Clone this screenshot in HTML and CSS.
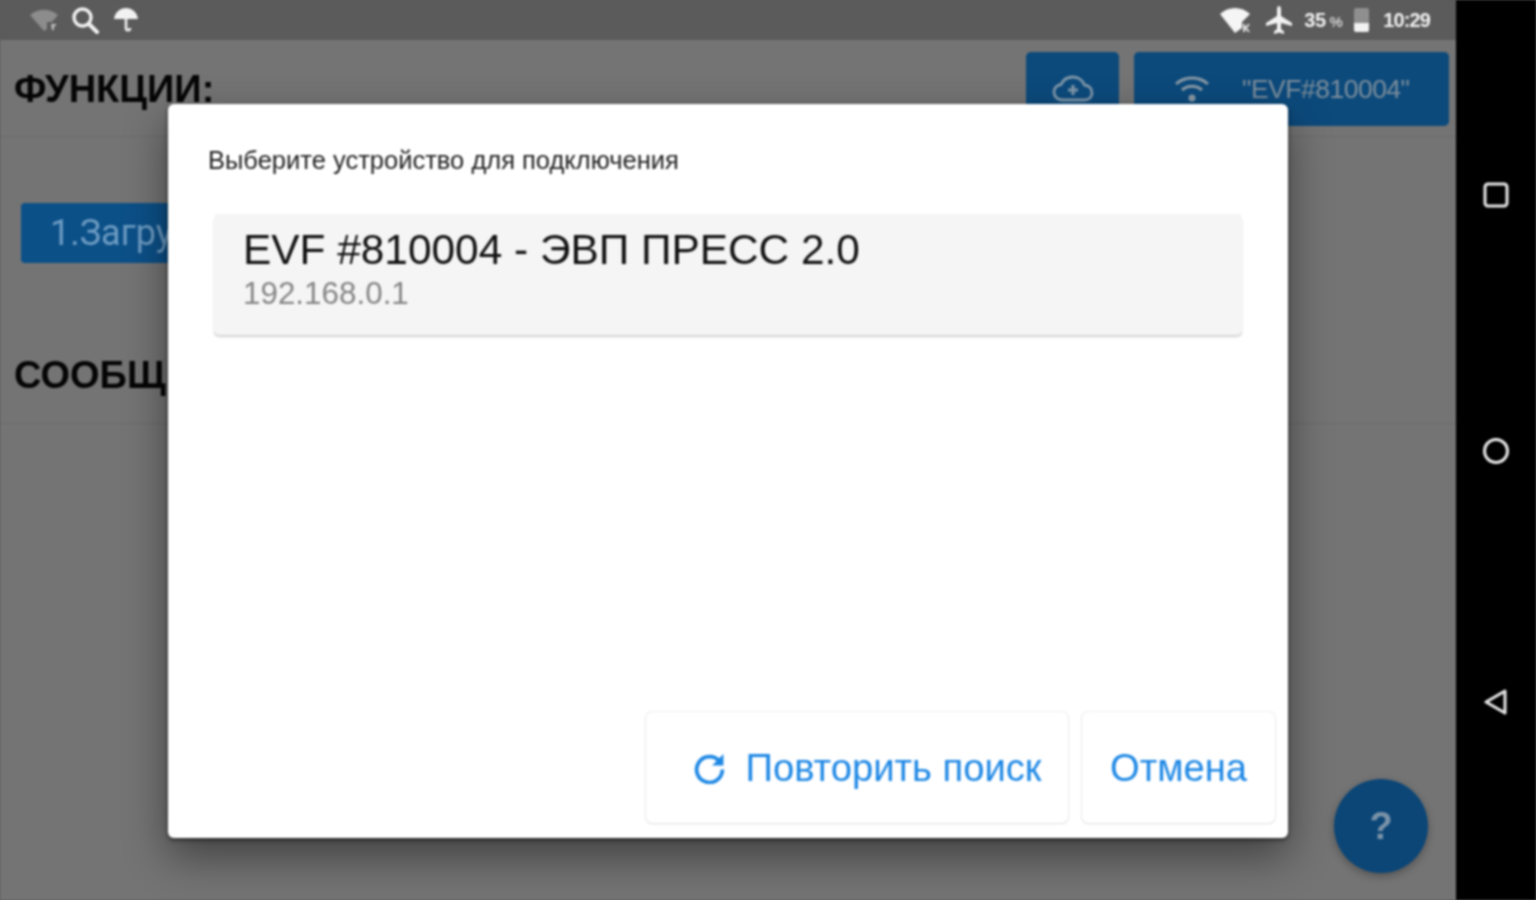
FILE: index.html
```html
<!DOCTYPE html>
<html lang="ru">
<head>
<meta charset="utf-8">
<title>Выбор устройства</title>
<link rel="stylesheet" href="styles.css">
</head>
<body>
<div class="device">
  <div class="screen">
    <div class="status">
      <div class="status-left">
        <svg class="ic wifi-dim" viewBox="0 0 28 22"><path d="M0 6C8-1 20-1 28 6L22 13H17V20L14 22Z" fill="#8c8c8c"/><path d="M21 15h5v2h-2v4h-2" fill="#bdbdbd"/></svg>
        <svg class="ic search" viewBox="0 0 28 28"><circle cx="11.500" cy="11.500" r="8.500" fill="none" stroke="#f2f2f2" stroke-width="3.400"/><path d="M18 18l8 8" stroke="#f2f2f2" stroke-width="4" stroke-linecap="round"/></svg>
        <svg class="ic umbrella" viewBox="0 0 26 26"><path d="M1 12C2 5 7 1 13 1s11 4 12 11Z" fill="#f2f2f2"/><path d="M13 11v10c0 3 4 3 4 0" fill="none" stroke="#f2f2f2" stroke-width="2.600"/></svg>
      </div>
      <div class="status-right">
        <svg class="ic wifi-on" viewBox="0 0 30 26"><path d="M0 7C8-1 22-1 30 7L22 15V21L15 26Z" fill="#f5f5f5"/><path d="M23 17h2v3l3-3h2l-3 4 3 4h-2l-3-3v3h-2Z" fill="#e0e0e0"/></svg>
        <svg class="ic plane" viewBox="0 0 26 28"><path d="M13 0c1.500 0 2 2 2 4v6l11 7v3l-11-3v6l3 2.500V28l-5-1.500L8 28v-2.500l3-2.500v-6L0 20v-3l11-7V4c0-2 .5-4 2-4Z" fill="#f2f2f2"/></svg>
        <span class="pct">35<small>%</small></span>
        <span class="battery"><span class="battery-fill"></span></span>
        <span class="clock">10:29</span>
      </div>
    </div>

    <header class="bar">
      <h2 class="heading">ФУНКЦИИ:</h2>
      <div class="bar-actions">
        <button class="top-btn cloud-btn">
          <svg class="cloud" viewBox="0 0 42 32"><path d="M11 25C5 25 2 21 2 17c0-4 3-7 7-7.500C11 5 15 2 21 2c6 0 10 4 11.500 8C37 10.500 40 13.500 40 18c0 4-3 7-8 7Z" fill="none" stroke="#7f97aa" stroke-width="2.800"/><path d="M21 10v10M16 15h10" stroke="#7f97aa" stroke-width="3.200"/></svg>
        </button>
        <button class="top-btn conn-btn">
          <svg class="wifi-line" viewBox="0 0 36 30"><path d="M2 10c9-8 23-8 32 0M8 16c6-5 14-5 20 0" fill="none" stroke="#8a9aa6" stroke-width="3"/><circle cx="18" cy="24" r="3.500" fill="#8a9aa6"/></svg>
          <span>"EVF#810004"</span>
        </button>
      </div>
    </header>

    <section class="functions">
      <button class="load-btn">1.Загрузка</button>
    </section>

    <section class="messages">
      <h2 class="heading">СООБЩЕНИЯ:</h2>
    </section>

    <div class="dialog">
      <p class="dialog-title">Выберите устройство для подключения</p>
      <div class="card">
        <div class="card-name">EVF #810004 - ЭВП ПРЕСС 2.0</div>
        <div class="card-ip">192.168.0.1</div>
      </div>
      <div class="actions">
        <button class="act act-retry">
          <svg class="refresh" viewBox="0 0 32 32"><path d="M26 10.500A12.500 12.500 0 1 0 28.500 18" fill="none" stroke="#1e88e5" stroke-width="3.600"/><path d="M29.500 3v11h-11Z" fill="#1e88e5"/></svg>
          <span>Повторить поиск</span>
        </button>
        <button class="act act-cancel">Отмена</button>
      </div>
    </div>

    <button class="fab">?</button>
  </div>

  <nav class="nav">
    <svg class="nav-ic nav-square" viewBox="0 0 26 26"><rect x="2" y="2" width="22" height="22" rx="3" fill="none" stroke="#e8e8e8" stroke-width="3"/></svg>
    <svg class="nav-ic nav-circle" viewBox="0 0 26 26"><circle cx="13" cy="13" r="11.500" fill="none" stroke="#e8e8e8" stroke-width="3"/></svg>
    <svg class="nav-ic nav-back" viewBox="0 0 26 26"><path d="M22 2V24L3 13Z" fill="none" stroke="#e8e8e8" stroke-width="3" stroke-linejoin="round"/></svg>
  </nav>
</div>
</body>
</html>
```
FILE: styles.css
```css
* { box-sizing: border-box; }
html, body { margin: 0; height: 100%; overflow: hidden; background: #5b5b5b; }
body { font-family: "Liberation Sans", Arial, sans-serif; }
button { font-family: inherit; border: 0; padding: 0; }

.device { display: flex; width: 1536px; height: 900px; filter: blur(0.8px); }
.screen { position: relative; width: 1456px; height: 900px; background: #747474; overflow: hidden; }
.nav { width: 80px; background: #000; display: flex; flex-direction: column; align-items: center; padding-top: 182px; }
.nav-ic { width: 26px; height: 26px; display: block; }
.nav-circle { margin-top: 230px; }
.nav-back { margin-top: 225px; }

.status { height: 40px; background: #5b5b5b; display: flex; justify-content: space-between; align-items: center; padding: 0 26px 0 30px; }
.status-left, .status-right { display: flex; align-items: center; }
.ic { display: block; }
.wifi-dim { width: 28px; height: 22px; }
.search { width: 28px; height: 28px; margin-left: 13px; }
.umbrella { width: 26px; height: 26px; margin-left: 14px; }
.wifi-on { width: 30px; height: 26px; }
.plane { width: 26px; height: 28px; margin-left: 16px; }
.pct { color: #f0f0f0; font-size: 20px; font-weight: 700; margin-left: 12px; letter-spacing: -0.5px; width: 41px; white-space: nowrap; }
.pct small { font-size: 15px; color: #cfcfcf; margin-left: 4px; }
.battery { display: flex; align-items: flex-end; width: 15px; height: 24px; margin-left: 9px; background: #8f8f8f; border-radius: 2px; overflow: hidden; }
.battery-fill { display: block; width: 100%; height: 9px; background: #f2f2f2; }
.clock { color: #f0f0f0; font-size: 20px; font-weight: 700; margin-left: 14px; letter-spacing: -0.9px; }

.bar { height: 97px; border-bottom: 1px solid #6b6b6b; display: flex; justify-content: space-between; padding: 12px 7px 0 14px; }
.heading { margin: 0; color: #050505; font-size: 38px; font-weight: 700; line-height: 74px; white-space: nowrap; }
.bar-actions { display: flex; gap: 15px; }
.top-btn { height: 74px; background: #0c4a7c; border-radius: 5px; display: flex; align-items: center; }
.cloud-btn { width: 93px; justify-content: center; padding-top: 4px; }
.cloud { width: 42px; height: 32px; display: block; }
.conn-btn { width: 315px; padding: 0 0 0 40px; color: #7d8e9c; font-size: 26.500px; gap: 32px; white-space: nowrap; letter-spacing: -0.5px; }
.wifi-line { width: 36px; height: 30px; display: block; }

.functions { height: 167px; padding: 66px 0 0 21px; }
.load-btn { width: 320px; height: 60px; background: #0c5088; color: #6d9cc2; border-radius: 4px; font-size: 36px; text-align: left; padding-left: 29px; font-family: Roboto, sans-serif; }

.messages { height: 120px; padding: 34px 14px 0; border-bottom: 1px solid #6b6b6b; }

.dialog { position: absolute; left: 168px; top: 104px; width: 1120px; height: 734px; background: #fff; border-radius: 6px; box-shadow: 0 18px 44px rgba(0, 0, 0, 0.45), 0 2px 4px rgba(0, 0, 0, 0.5); display: flex; flex-direction: column; padding: 43px 13px 15px 40px; }
.dialog-title { margin: 0; font-size: 25.500px; line-height: 26px; color: #222; white-space: nowrap; }
.card { width: 1028px; height: 121px; margin: 41px 0 0 6px; padding: 12px 29px 0; background: #f5f5f5; border-radius: 5px; box-shadow: 0 2px 2px rgba(0, 0, 0, 0.18); }
.card-name { font-size: 42.400px; line-height: 48px; color: #111; white-space: nowrap; }
.card-ip { font-size: 31.400px; line-height: 40px; color: #858585; }
.actions { margin-top: auto; display: flex; justify-content: flex-end; gap: 14px; }
.act { height: 111px; background: #fff; border-radius: 6px; color: #1e88e5; font-size: 38.200px; box-shadow: 0 0 2px rgba(0, 0, 0, 0.2), 0 1px 2px rgba(0, 0, 0, 0.08); display: flex; align-items: center; justify-content: center; white-space: nowrap; }
.act-retry { width: 422px; gap: 19px; padding-left: 21px; }
.refresh { width: 33px; height: 33px; display: block; }
.act-cancel { width: 193px; }

.fab { position: absolute; left: 1334px; top: 779px; width: 94px; height: 94px; border-radius: 50%; background: #0b4677; color: #7b93a8; font-size: 38px; font-weight: 700; box-shadow: 0 3px 8px rgba(0, 0, 0, 0.3); }
```
